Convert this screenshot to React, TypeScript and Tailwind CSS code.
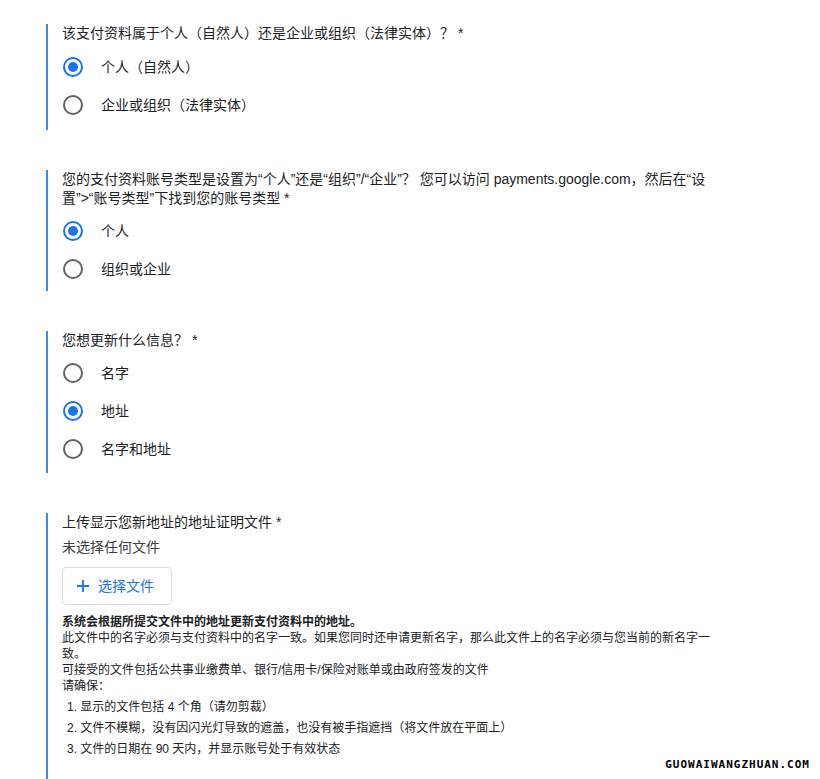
import React from "react";

type RadioProps = { label: string; checked?: boolean };

const Radio = ({ label, checked }: RadioProps) => {
  return (
    <div className="flex items-center h-[38px]">
      <div className="w-[40px] flex items-center justify-center">
        <div
          className={
            checked
              ? "w-[20px] h-[20px] rounded-full border-2 border-[#1a73e8] flex items-center justify-center"
              : "w-[20px] h-[20px] rounded-full border-2 border-[#5f6368]"
          }
        >
          {checked && <div className="w-[10px] h-[10px] rounded-full bg-[#1a73e8]" />}
        </div>
      </div>
      <span className="ml-[8px] text-[14px] text-[#202124]">{label}</span>
    </div>
  );
};

type SectionProps = { title: React.ReactNode; children: React.ReactNode };

const Section = ({ title, children }: SectionProps) => {
  return (
    <div className="border-l-2 border-[#4285f4] pl-[14px]">
      <div className="text-[14px] leading-[19px] text-[#202124] w-[682px]">{title}</div>
      {children}
    </div>
  );
};

export default function App() {
  return (
    <div
      className="w-[820px] h-[779px] bg-white overflow-hidden relative"
      style={{ fontFamily: '"Liberation Sans", "Noto Sans CJK SC", sans-serif' }}
    >
      <div className="pl-[46px] pt-[24px] flex flex-col gap-[40px]">
        <Section title="该支付资料属于个人（自然人）还是企业或组织（法律实体）？ *">
          <div className="mt-[5px] -ml-[9px] pb-[6px]">
            <Radio label="个人（自然人）" checked />
            <Radio label="企业或组织（法律实体）" />
          </div>
        </Section>

        <Section title="您的支付资料账号类型是设置为“个人”还是“组织”/“企业”？ 您可以访问 payments.google.com，然后在“设置”>“账号类型”下找到您的账号类型 *">
          <div className="mt-[4px] -ml-[9px] pb-[3px]">
            <Radio label="个人" checked />
            <Radio label="组织或企业" />
          </div>
        </Section>

        <Section title="您想更新什么信息？ *">
          <div className="mt-[4px] -ml-[9px] pb-[5px]">
            <Radio label="名字" />
            <Radio label="地址" checked />
            <Radio label="名字和地址" />
          </div>
        </Section>

        <Section title="上传显示您新地址的地址证明文件 *">
          <div className="mt-[6px] text-[14px] leading-[19px] text-[#3c4043]">未选择任何文件</div>
          <button className="mt-[10px] w-[110px] h-[38px] border border-[#dadce0] rounded-[4px] flex items-center pl-[13px] gap-[8px] text-[#1a73e8] text-[14px]">
            <svg width="14" height="14" viewBox="0 0 14 14">
              <path d="M7 1v12M1 7h12" stroke="#1a73e8" strokeWidth="1.8" />
            </svg>
            <span>选择文件</span>
          </button>
          <div className="mt-[9px] text-[12px] leading-[16px] text-[#202124] w-[664px]">
            <div className="font-bold">系统会根据所提交文件中的地址更新支付资料中的地址。</div>
            <div>此文件中的名字必须与支付资料中的名字一致。如果您同时还申请更新名字，那么此文件上的名字必须与您当前的新名字一致。</div>
            <div>可接受的文件包括公共事业缴费单、银行/信用卡/保险对账单或由政府签发的文件</div>
            <div>请确保：</div>
            <ol className="mt-[5px] pl-[5px] flex flex-col gap-[5px]">
              <li>1. 显示的文件包括 4 个角（请勿剪裁）</li>
              <li>2. 文件不模糊，没有因闪光灯导致的遮盖，也没有被手指遮挡（将文件放在平面上）</li>
              <li>3. 文件的日期在 90 天内，并显示账号处于有效状态</li>
            </ol>
            <div className="h-[40px]" />
          </div>
        </Section>
      </div>
      <div
        className="absolute right-[10px] top-[757px] text-[11px] font-bold tracking-[1px] text-black"
        style={{ fontFamily: '"DejaVu Sans Mono", monospace' }}
      >
        GUOWAIWANGZHUAN.COM
      </div>
    </div>
  );
}
